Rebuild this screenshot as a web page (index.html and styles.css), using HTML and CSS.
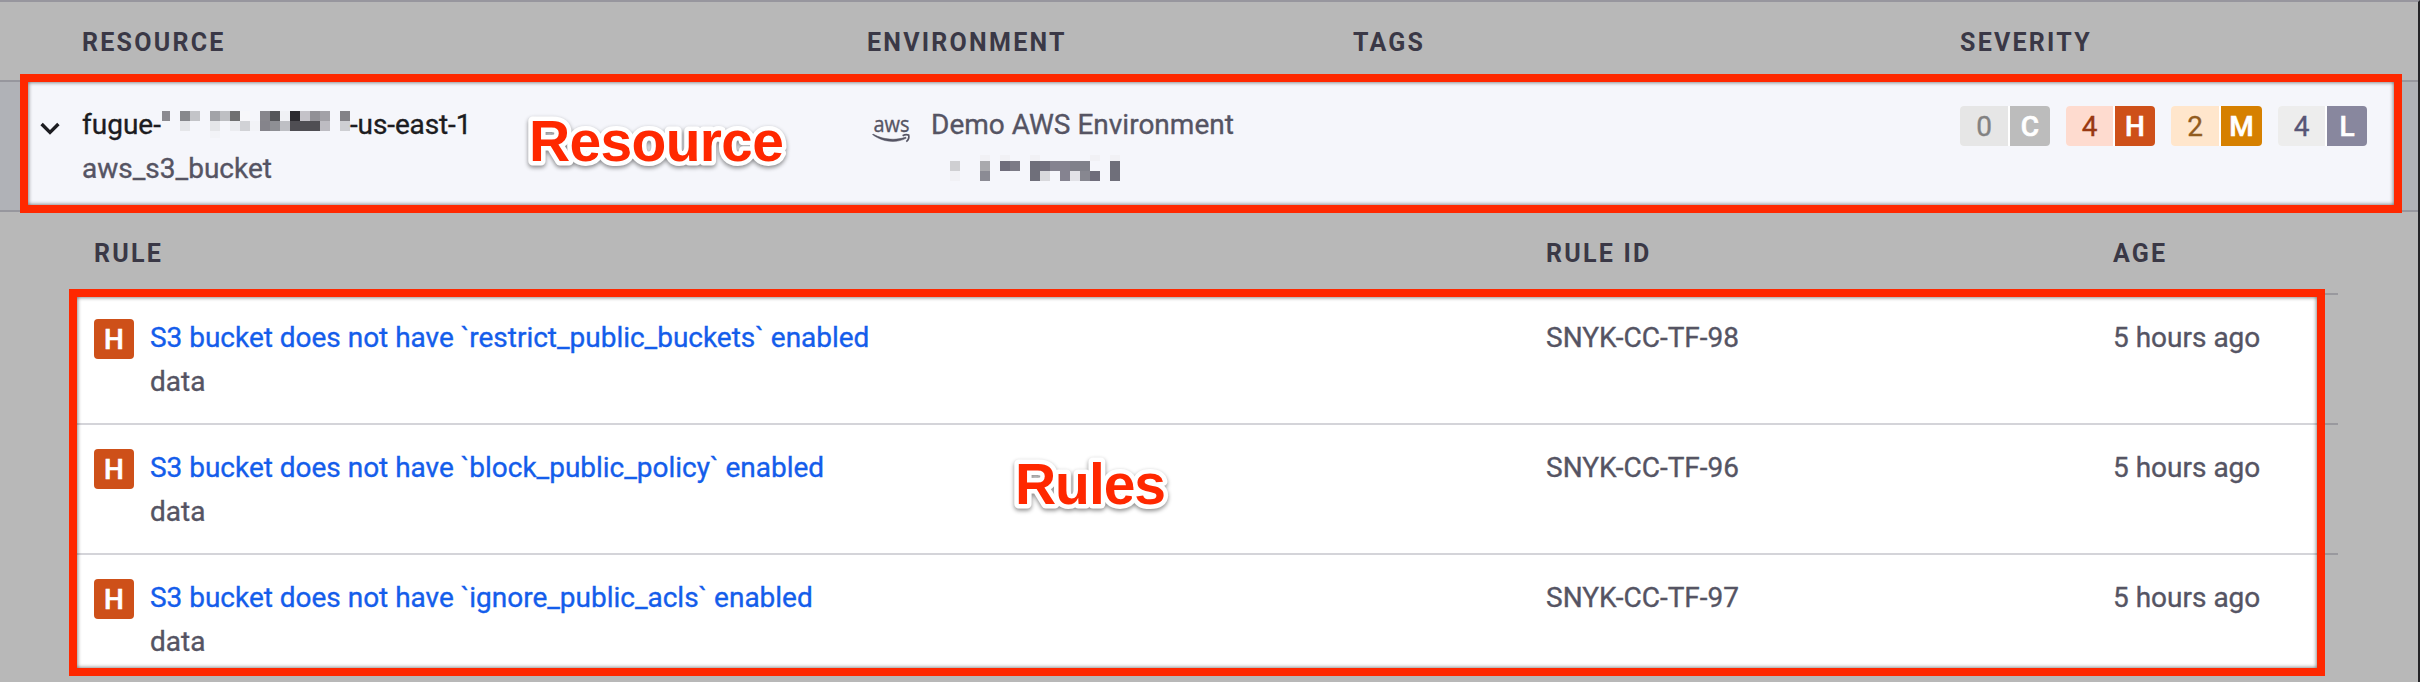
FILE: index.html
```html
<!DOCTYPE html>
<html lang="en">
<head>
<meta charset="utf-8">
<title>Resources</title>
<link rel="stylesheet" href="styles.css">
</head>
<body>
<main class="page">
  <div class="highlight highlight-resource"></div>
  <div class="highlight highlight-rules"></div>

  <header class="resource-grid resource-head">
    <span class="w-resource">Resource</span><span class="w-env">Environment</span><span class="w-tags">Tags</span><span class="w-sev">Severity</span>
  </header>

  <section class="resource-grid resource-row">
    <div class="resource-cell">
      <svg class="chevron" width="20" height="14" viewBox="0 0 20 14"><path d="M1.6 2 10 10.4 18.4 2" fill="none" stroke="#1c1c21" stroke-width="3.4"/></svg>
      <div class="resource-name"><span class="name-a">fugue-</span><svg class="mosaic" width="188" height="30" viewBox="0 0 188 30" shape-rendering="crispEdges">
        <path fill="#8b8a90" d="M0 0h8v10H0z"/><path fill="#87888c" d="M18 0h10v10H18z"/><path fill="#c3c4c8" d="M28 0h10v10H28z"/><path fill="#a2a3a8" d="M48 0h10v10H48z"/><path fill="#bebfc3" d="M58 0h10v10H58z"/><path fill="#707071" d="M68 0h10v10H68z"/><path fill="#f7f7fa" d="M78 0h10v10H78z"/><path fill="#87868c" d="M98 0h10v10H98z"/><path fill="#55565a" d="M108 0h10v10h-10z"/><path fill="#f0f1f5" d="M118 0h10v10h-10z"/><path fill="#2c2b30" d="M128 0h10v10h-10z"/><path fill="#c4c2c8" d="M138 0h10v10h-10z"/><path fill="#919096" d="M148 0h10v10h-10z"/><path fill="#a2a1a7" d="M158 0h10v10h-10z"/><path fill="#838287" d="M178 0h10v10h-10z"/>
        <path fill="#e5e6e9" d="M18 10h10v10H18zM48 10h10v10H48z"/><path fill="#ebecf0" d="M68 10h10v10H68z"/><path fill="#d1d2d6" d="M78 10h10v10H78z"/><path fill="#f2f3f7" d="M88 10h10v10H88zM48 20h10v7H48z"/><path fill="#85848b" d="M98 10h10v10H98z"/><path fill="#8e8f94" d="M108 10h10v10h-10z"/><path fill="#bebfc4" d="M118 10h10v10h-10z"/><path fill="#4f4e53" d="M128 10h30v10h-30z"/><path fill="#bdbcc2" d="M158 10h10v10h-10z"/><path fill="#cecfd3" d="M178 10h10v10h-10z"/>
      </svg><span class="name-b">-us-east-1</span></div>
      <div class="muted type">aws_s3_bucket</div>
    </div>
    <div class="env-cell">
      <svg class="aws" width="40" height="36" viewBox="0 -10 40 36"><text class="aws-word" x="1.4" y="13.6" textLength="36" lengthAdjust="spacingAndGlyphs">aws</text><path d="M.5 16.6C11 24.6 24.500 25.200 34.200 20.300l-.5-1.200C24 22.600 11.500 22 1 16.100z" fill="#555463" stroke="#555463" stroke-width=".5"/><path d="M30.600 17.800c2.200-1.300 4.800-1.200 6.100-.7.500 2-.5 5-2.400 6.500" fill="none" stroke="#555463" stroke-width="1.700"/></svg>
      <div class="env-text">
        <div class="muted env-name">Demo AWS Environment</div>
        <svg class="mosaic-env" width="170" height="26" viewBox="0 0 170 26" shape-rendering="crispEdges">
          <path fill="#f1f1f5" d="M30 0h10v6H30zM50 0h10v6H50zM80 0h10v6H80zM140 0h10v6h-10zM160 0h10v6h-10zM0 16h10v10H0z"/>
          <path fill="#cfcfd2" d="M0 6h10v10H0z"/><path fill="#a9a9ad" d="M30 6h10v10H30z"/><path fill="#8b8b94" d="M30 16h10v10H30z"/><path fill="#6f6d7b" d="M50 6h10v10H50zM140 16h10v10h-10z"/><path fill="#7c7b86" d="M60 6h10v10H60z"/><path fill="#6f6f7a" d="M80 6h10v20H80zM160 6h10v20h-10z"/><path fill="#72707e" d="M90 6h10v10H90z"/><path fill="#858390" d="M100 6h20v10h-20zM110 16h10v10h-10z"/><path fill="#80818a" d="M120 6h20v10h-20z"/><path fill="#d9d9dd" d="M90 16h10v10H90z"/><path fill="#e2e2e7" d="M120 16h10v10h-10z"/><path fill="#878790" d="M130 16h10v10h-10z"/>
        </svg>
      </div>
    </div>
    <div></div>
    <div class="severities">
      <div class="sev sev-c"><span>0</span><b>C</b></div>
      <div class="sev sev-h"><span>4</span><b>H</b></div>
      <div class="sev sev-m"><span>2</span><b>M</b></div>
      <div class="sev sev-l"><span>4</span><b>L</b></div>
    </div>
  </section>

  <section class="rules">
    <header class="rule-grid rule-head"><span class="h-rule">Rule</span><span>Rule ID</span><span>Age</span></header>
    <article class="rule-grid rule-row">
      <div class="rule-cell"><b class="tile">H</b><div><a class="link">S3 bucket does not have `restrict_public_buckets` enabled</a><div class="muted">data</div></div></div>
      <div class="muted rid">SNYK-CC-TF-98</div><div class="muted age">5 hours ago</div>
    </article>
    <article class="rule-grid rule-row">
      <div class="rule-cell"><b class="tile">H</b><div><a class="link">S3 bucket does not have `block_public_policy` enabled</a><div class="muted">data</div></div></div>
      <div class="muted rid">SNYK-CC-TF-96</div><div class="muted age">5 hours ago</div>
    </article>
    <article class="rule-grid rule-row">
      <div class="rule-cell"><b class="tile">H</b><div><a class="link">S3 bucket does not have `ignore_public_acls` enabled</a><div class="muted">data</div></div></div>
      <div class="muted rid">SNYK-CC-TF-97</div><div class="muted age">5 hours ago</div>
    </article>
  </section>

  <div class="frame frame-resource"></div>
  <div class="frame frame-rules"></div>
  <svg class="callout callout-resource" width="290" height="80"><text x="16" y="55" textLength="255">Resource</text></svg>
  <svg class="callout callout-rules" width="190" height="80"><text x="16" y="55" textLength="151">Rules</text></svg>
</main>
</body>
</html>
```
FILE: styles.css
```css
* { box-sizing: border-box; }
body { margin: 0; background: #b8b8b8; font-family: Roboto, "Liberation Sans", sans-serif; font-size: 28px; line-height: 44px; color: #1c1c21; -webkit-text-stroke: .35px; }
.page { position: relative; isolation: isolate; width: 2420px; height: 682px; overflow: hidden; border-top: 2px solid #97969e; border-right: 2px solid #242427; }

.resource-grid { display: grid; grid-template-columns: 785px 486px 607px 1fr; padding-left: 82px; border-bottom: 2px solid #97979e; white-space: nowrap; }
.resource-head, .rule-head { font-size: 25px; font-weight: 700; letter-spacing: 2.25px; text-transform: uppercase; color: #3a3846; -webkit-text-stroke: 0; }
.resource-head { height: 80px; line-height: 81px; }
.resource-row { height: 130px; padding-top: 21px; background: #b0b2b7; }
.resource-cell { position: relative; }
.chevron { position: absolute; left: -42px; top: 19px; }
.resource-name { display: flex; height: 44px; }
.name-a { width: 80px; }
.name-b { letter-spacing: -.12px; }
.mosaic { flex: none; margin-top: 8px; }
.muted { color: #555463; }
.env-cell { display: flex; padding-left: 5px; }
.aws { flex: none; margin-top: 5px; }
.aws-word { font-family: "Open Sans", sans-serif; font-size: 21px; fill: #555463; stroke: #555463; stroke-width: .35px; }
.env-text { padding-left: 19px; }
.mosaic-env { display: block; margin: 8px 0 0 19px; }

.severities { display: flex; gap: 16px; padding-top: 3px; line-height: 41px; }
.sev { display: flex; gap: 2px; height: 40px; background: #fff; border-radius: 4px; overflow: hidden; text-align: center; }
.sev span { width: 47px; }
.sev b { width: 40px; color: #fff; }
.sev-c span { width: 48px; color: #828282; background: #e6e6e6; }
.sev-c b { background: #bcbcbc; }
.sev-h span { color: #993812; background: #fedbcf; }
.sev-h b { background: #ce5019; }
.sev-m span { width: 48px; color: #925c1e; background: #ffe6cc; }
.sev-m b { width: 41px; background: #d68000; }
.sev-l span { color: #585676; background: #ededed; }
.sev-l b { background: #88879e; }
.sev b, .tile { font-weight: 500; -webkit-text-stroke: .6px; }

.rules { width: 2265px; margin-left: 73px; }
.rule-grid { display: grid; grid-template-columns: 1453px 567px 1fr; padding-left: 20px; border-bottom: 2px solid rgba(0, 0, 30, .17); white-space: nowrap; }
.rule-head { height: 83px; line-height: 84px; }
.h-rule { padding-left: 1px; }
.rule-row { height: 130px; padding-top: 21px; }
.rule-row:last-child { border-bottom: 0; }
.rule-cell { display: flex; gap: 16px; padding-left: 1px; }
.tile { width: 40px; height: 40px; margin-top: 3px; border-radius: 4px; background: #ce5019; color: #fff; text-align: center; line-height: 41px; }
.link { display: block; color: #145deb; letter-spacing: -.02px; }

/* Highlighted areas sit under the text, their frames above it. */
.highlight, .frame, .callout { position: absolute; }
.highlight { z-index: -1; }
.highlight-resource, .frame-resource { left: 20px; top: 72px; width: 2382px; height: 139px; }
.highlight-rules, .frame-rules { left: 69px; top: 287px; width: 2256px; height: 387px; }
.highlight-resource { z-index: 0; background: #f5f6fb; }
.highlight-rules { background: #fff; }
.resource-row > * { position: relative; z-index: 1; }
.frame { z-index: 2; border: 8px solid #ff2800; box-shadow: inset 0 0 4px rgba(0, 0, 0, .65); }
.callout { z-index: 3; overflow: visible; filter: drop-shadow(0 2px 2px rgba(0, 0, 0, .45)); }
.callout text { font: 700 57px "Liberation Sans", Arial, sans-serif; fill: #ff2800; stroke: #fff; stroke-width: 9px; stroke-linejoin: round; paint-order: stroke; }
.callout-resource { left: 513px; top: 104px; }
.callout-rules { left: 999px; top: 447px; }
```
